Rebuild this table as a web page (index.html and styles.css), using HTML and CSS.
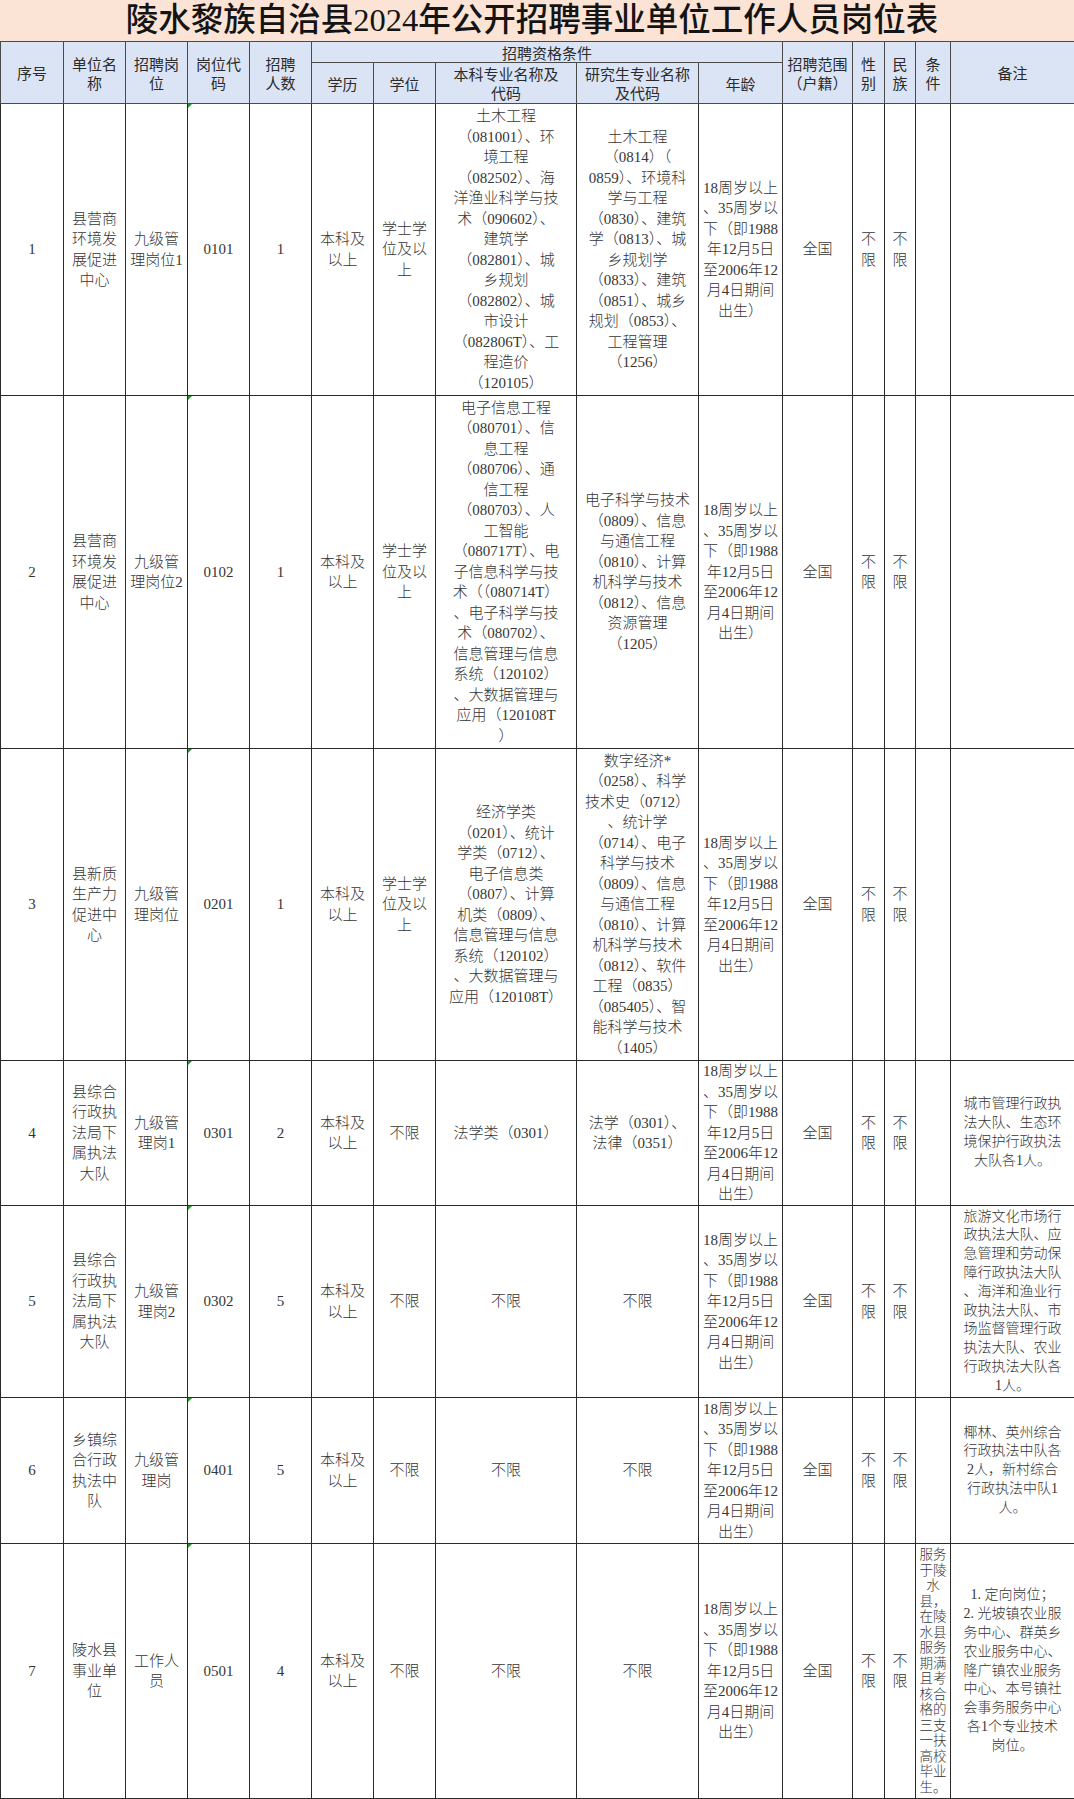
FILE: index.html
```html
<!DOCTYPE html>
<html lang="zh-CN">
<head>
<meta charset="utf-8">
<title>陵水黎族自治县2024年公开招聘事业单位工作人员岗位表</title>
<link rel="stylesheet" href="styles.css">
</head>
<body>
<div class="title">陵水黎族自治县2024年公开招聘事业单位工作人员岗位表</div>
<table class="sheet">
<colgroup>
<col class="c63"><col class="c62"><col class="c62"><col class="c62"><col class="c62"><col class="c62"><col class="c62">
<col class="c141"><col class="c122"><col class="c84"><col class="c70"><col class="c32"><col class="c31"><col class="c35"><col class="c124">
</colgroup>
<thead>
<tr class="h1">
<th rowspan="2">序号</th>
<th rowspan="2">单位名<br>称</th>
<th rowspan="2">招聘岗<br>位</th>
<th rowspan="2">岗位代<br>码</th>
<th rowspan="2">招聘<br>人数</th>
<th colspan="5" class="grp">招聘资格条件</th>
<th rowspan="2">招聘范围<br>（户籍）</th>
<th rowspan="2">性<br>别</th>
<th rowspan="2">民<br>族</th>
<th rowspan="2">条<br>件</th>
<th rowspan="2">备注</th>
</tr>
<tr class="h2">
<th>学历</th>
<th>学位</th>
<th>本科专业名称及<br>代码</th>
<th>研究生专业名称<br>及代码</th>
<th>年龄</th>
</tr>
</thead>
<tbody>
<tr class="r1">
<td>1</td>
<td>县营商<br>环境发<br>展促进<br>中心</td>
<td>九级管<br>理岗位1</td>
<td class="code">0101</td>
<td>1</td>
<td>本科及<br>以上</td>
<td>学士学<br>位及以<br>上</td>
<td>土木工程<br>（081001）、环<br>境工程<br>（082502）、海<br>洋渔业科学与技<br>术（090602）、<br>建筑学<br>（082801）、城<br>乡规划<br>（082802）、城<br>市设计<br>（082806T）、工<br>程造价<br>（120105）</td>
<td>土木工程<br>（0814）（<br>0859）、环境科<br>学与工程<br>（0830）、建筑<br>学（0813）、城<br>乡规划学<br>（0833）、建筑<br>（0851）、城乡<br>规划（0853）、<br>工程管理<br>（1256）</td>
<td>18周岁以上<br>、35周岁以<br>下（即1988<br>年12月5日<br>至2006年12<br>月4日期间<br>出生）</td>
<td>全国</td>
<td>不<br>限</td>
<td>不<br>限</td>
<td class="cond"></td>
<td class="rem"></td>
</tr>
<tr class="r2">
<td>2</td>
<td>县营商<br>环境发<br>展促进<br>中心</td>
<td>九级管<br>理岗位2</td>
<td class="code">0102</td>
<td>1</td>
<td>本科及<br>以上</td>
<td>学士学<br>位及以<br>上</td>
<td>电子信息工程<br>（080701）、信<br>息工程<br>（080706）、通<br>信工程<br>（080703）、人<br>工智能<br>（080717T）、电<br>子信息科学与技<br>术（（080714T）<br>、电子科学与技<br>术（080702）、<br>信息管理与信息<br>系统（120102）<br>、大数据管理与<br>应用（120108T<br>）</td>
<td>电子科学与技术<br>（0809）、信息<br>与通信工程<br>（0810）、计算<br>机科学与技术<br>（0812）、信息<br>资源管理<br>（1205）</td>
<td>18周岁以上<br>、35周岁以<br>下（即1988<br>年12月5日<br>至2006年12<br>月4日期间<br>出生）</td>
<td>全国</td>
<td>不<br>限</td>
<td>不<br>限</td>
<td class="cond"></td>
<td class="rem"></td>
</tr>
<tr class="r3">
<td>3</td>
<td>县新质<br>生产力<br>促进中<br>心</td>
<td>九级管<br>理岗位</td>
<td class="code">0201</td>
<td>1</td>
<td>本科及<br>以上</td>
<td>学士学<br>位及以<br>上</td>
<td>经济学类<br>（0201）、统计<br>学类（0712）、<br>电子信息类<br>（0807）、计算<br>机类（0809）、<br>信息管理与信息<br>系统（120102）<br>、大数据管理与<br>应用（120108T）</td>
<td>数字经济*<br>（0258）、科学<br>技术史（0712）<br>、统计学<br>（0714）、电子<br>科学与技术<br>（0809）、信息<br>与通信工程<br>（0810）、计算<br>机科学与技术<br>（0812）、软件<br>工程（0835）<br>（085405）、智<br>能科学与技术<br>（1405）</td>
<td>18周岁以上<br>、35周岁以<br>下（即1988<br>年12月5日<br>至2006年12<br>月4日期间<br>出生）</td>
<td>全国</td>
<td>不<br>限</td>
<td>不<br>限</td>
<td class="cond"></td>
<td class="rem"></td>
</tr>
<tr class="r4">
<td>4</td>
<td>县综合<br>行政执<br>法局下<br>属执法<br>大队</td>
<td>九级管<br>理岗1</td>
<td class="code">0301</td>
<td>2</td>
<td>本科及<br>以上</td>
<td>不限</td>
<td>法学类（0301）</td>
<td>法学（0301）、<br>法律（0351）</td>
<td>18周岁以上<br>、35周岁以<br>下（即1988<br>年12月5日<br>至2006年12<br>月4日期间<br>出生）</td>
<td>全国</td>
<td>不<br>限</td>
<td>不<br>限</td>
<td class="cond"></td>
<td class="rem">城市管理行政执<br>法大队、生态环<br>境保护行政执法<br>大队各1人。</td>
</tr>
<tr class="r5">
<td>5</td>
<td>县综合<br>行政执<br>法局下<br>属执法<br>大队</td>
<td>九级管<br>理岗2</td>
<td class="code">0302</td>
<td>5</td>
<td>本科及<br>以上</td>
<td>不限</td>
<td>不限</td>
<td>不限</td>
<td>18周岁以上<br>、35周岁以<br>下（即1988<br>年12月5日<br>至2006年12<br>月4日期间<br>出生）</td>
<td>全国</td>
<td>不<br>限</td>
<td>不<br>限</td>
<td class="cond"></td>
<td class="rem">旅游文化市场行<br>政执法大队、应<br>急管理和劳动保<br>障行政执法大队<br>、海洋和渔业行<br>政执法大队、市<br>场监督管理行政<br>执法大队、农业<br>行政执法大队各<br>1人。</td>
</tr>
<tr class="r6">
<td>6</td>
<td>乡镇综<br>合行政<br>执法中<br>队</td>
<td>九级管<br>理岗</td>
<td class="code">0401</td>
<td>5</td>
<td>本科及<br>以上</td>
<td>不限</td>
<td>不限</td>
<td>不限</td>
<td>18周岁以上<br>、35周岁以<br>下（即1988<br>年12月5日<br>至2006年12<br>月4日期间<br>出生）</td>
<td>全国</td>
<td>不<br>限</td>
<td>不<br>限</td>
<td class="cond"></td>
<td class="rem">椰林、英州综合<br>行政执法中队各<br>2人，新村综合<br>行政执法中队1<br>人。</td>
</tr>
<tr class="r7">
<td>7</td>
<td>陵水县<br>事业单<br>位</td>
<td>工作人<br>员</td>
<td class="code">0501</td>
<td>4</td>
<td>本科及<br>以上</td>
<td>不限</td>
<td>不限</td>
<td>不限</td>
<td>18周岁以上<br>、35周岁以<br>下（即1988<br>年12月5日<br>至2006年12<br>月4日期间<br>出生）</td>
<td>全国</td>
<td>不<br>限</td>
<td>不<br>限</td>
<td class="cond">服务<br>于陵<br>水<br>县，<br>在陵<br>水县<br>服务<br>期满<br>且考<br>核合<br>格的<br>三支<br>一扶<br>高校<br>毕业<br>生。</td>
<td class="rem">1. 定向岗位；<br>2. 光坡镇农业服<br>务中心、群英乡<br>农业服务中心、<br>隆广镇农业服务<br>中心、本号镇社<br>会事务服务中心<br>各1个专业技术<br>岗位。</td>
</tr>
</tbody>
</table>
</body>
</html>
```

FILE: styles.css
```css
html, body {
  margin: 0;
  padding: 0;
  background: #ffffff;
}

.title {
  height: 41px;
  background: #fbe4d6;
  color: #141414;
  font-family: "Liberation Serif", "Noto Sans CJK SC", serif;
  font-size: 32.5px;
  font-weight: 500;
  line-height: 41px;
  text-align: center;
  padding-right: 10px;
  white-space: nowrap;
  overflow: hidden;
}

.sheet {
  border-collapse: collapse;
  table-layout: fixed;
  width: 1074px;
}

.c63 { width: 63px; }
.c62 { width: 62px; }
.c141 { width: 141px; }
.c122 { width: 122px; }
.c84 { width: 84px; }
.c70 { width: 70px; }
.c32 { width: 32px; }
.c31 { width: 31px; }
.c35 { width: 35px; }
.c124 { width: 124px; }

.sheet th,
.sheet td {
  border: 1px solid #2a2a2a;
  padding: 0 2px;
  text-align: center;
  vertical-align: middle;
  white-space: nowrap;
  overflow: hidden;
}

.sheet th {
  background: #dae4f5;
  color: #2b2b2b;
  font-family: "Noto Sans CJK SC", sans-serif;
  font-size: 15px;
  font-weight: 400;
  line-height: 19px;
  border-color: #4a4a4a;
}

.sheet td {
  color: #353535;
  font-family: "Liberation Serif", "Noto Sans CJK SC", serif;
  font-size: 15px;
  font-weight: 300;
  line-height: 20.5px;
}

.h1 { height: 21px; }
.h2 { height: 41px; }
.r1 { height: 292px; }
.r2 { height: 353px; }
.r3 { height: 312px; }
.r4 { height: 145px; }
.r5 { height: 192px; }
.r6 { height: 146px; }
.r7 { height: 255px; }

.sheet td.rem {
  font-size: 14px;
  line-height: 18.8px;
  padding: 0 1px;
}

.sheet td.cond {
  font-size: 13.5px;
  line-height: 15.5px;
  padding: 0;
}

.sheet td.code {
  position: relative;
}

.sheet td.code::before {
  content: "";
  position: absolute;
  left: 0;
  top: 0;
  width: 0;
  height: 0;
  border-top: 4px solid #1f9a2a;
  border-right: 4px solid transparent;
}
```
